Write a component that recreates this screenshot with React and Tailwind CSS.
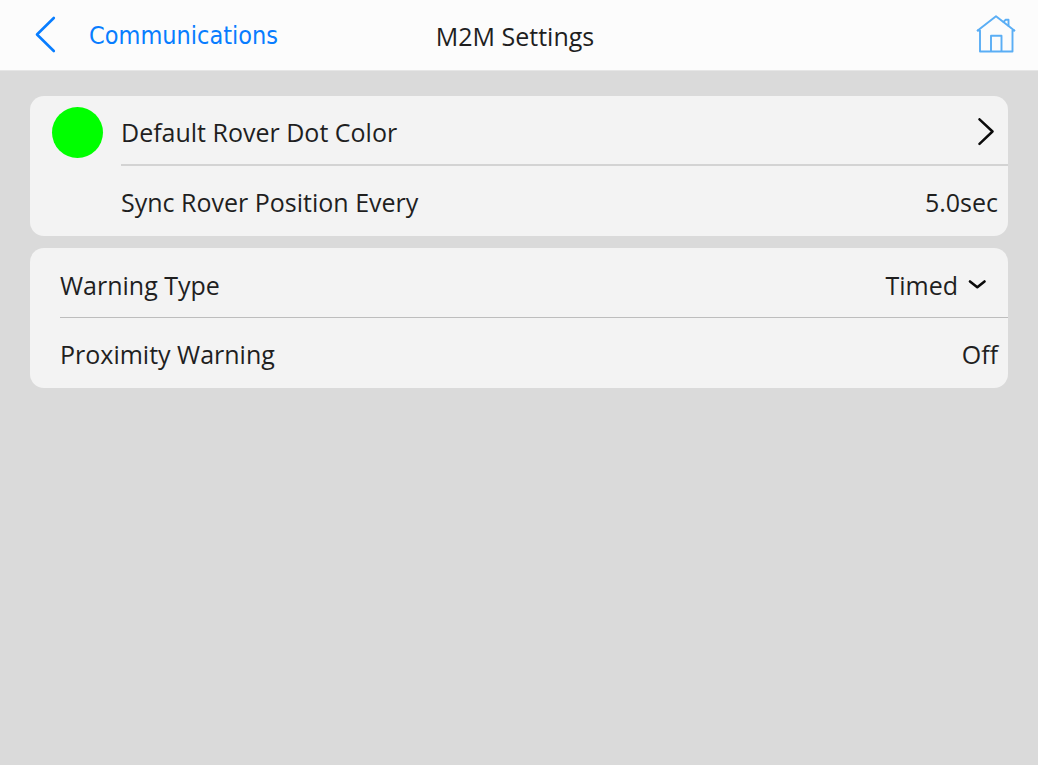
export default function App() {
  return (
    <div className="min-h-screen bg-[#dadada] font-['Open_Sans','Noto_Sans',sans-serif] text-[25px] leading-8 text-[#1f1f1f]">
      <Header title="M2M Settings" back="Communications" />

      <main className="flex flex-col gap-3 px-[30px] pt-[25px]">
        <Card>
          <button type="button" className="flex w-full items-center pl-[22px] text-left">
            <span className="mt-[3px] size-[51px] shrink-0 rounded-full bg-[#00ff00]" />
            <span className="ml-[18px] flex h-[70px] flex-1 items-center justify-between border-b-2 border-[#d3d3d3] pt-1 pr-[14px]">
              Default Rover Dot Color
              <ChevronRight />
            </span>
          </button>
          <ValueRow label="Sync Rover Position Every" value="5.0sec" className="pl-[91px]" />
        </Card>

        <Card>
          <div className="pl-[30px]">
            <div className="flex h-[70px] items-center justify-between border-b border-[#bdbdbd] pt-1 pr-[22px]">
              <label htmlFor="warning-type">Warning Type</label>
              <div className="relative flex items-center">
                <select
                  id="warning-type"
                  defaultValue="Timed"
                  className="field-sizing-content cursor-pointer appearance-none bg-transparent pr-7 outline-none"
                >
                  <option>Timed</option>
                </select>
                <ChevronDown />
              </div>
            </div>
          </div>
          <ValueRow label="Proximity Warning" value="Off" className="pl-[30px]" />
        </Card>
      </main>
    </div>
  );
}

const Header = ({ title, back }) => (
  <header className="grid h-[71px] grid-cols-[1fr_auto_1fr] items-center border-b border-[#e6e6e6] bg-[#fcfcfc] pr-[22px] pb-0.5 pl-[34px]">
    <a href="#communications" className="flex items-center gap-8 font-['DejaVu_Sans_Condensed','DejaVu_Sans',sans-serif] text-[#087dff]">
      <svg className="h-[38px] w-[23px]" viewBox="0 0 23 38" fill="none" stroke="currentColor" strokeWidth="2.6" strokeLinecap="round" strokeLinejoin="round">
        <path d="M19.8 3 3 19.5l16.8 16.5" />
      </svg>
      <span className="pt-1">{back}</span>
    </a>
    <h1 className="pt-1 pr-5">{title}</h1>
    <a href="#home" aria-label="Home" className="justify-self-end text-[#5aaef5]">
      <HomeIcon />
    </a>
  </header>
);

const Card = ({ children }) => (
  <section className="overflow-hidden rounded-[14px] bg-[#f3f3f3]">{children}</section>
);

// Label on the left, tappable value on the right
const ValueRow = ({ label, value, className }) => (
  <button type="button" className={`flex h-[70px] w-full items-center justify-between pt-0.5 pr-[10px] text-left ${className}`}>
    <span>{label}</span>
    <span>{value}</span>
  </button>
);

const ChevronRight = () => (
  <svg className="h-7 w-4" viewBox="0 0 16 28" fill="none" stroke="#0a0a0a" strokeWidth="2.5" strokeLinecap="round" strokeLinejoin="round">
    <path d="M1.5 1.3 14.5 13.5 1.5 25.8" />
  </svg>
);

const ChevronDown = () => (
  <svg className="pointer-events-none absolute right-0 h-[10px] w-[18px]" viewBox="0 0 18 10" fill="none" stroke="#0a0a0a" strokeWidth="2.6" strokeLinecap="round" strokeLinejoin="round">
    <path d="M2 1.5 9.3 7.2 16.5 1.5" />
  </svg>
);

const HomeIcon = () => (
  <svg className="h-[38px] w-[40px]" viewBox="0 0 40 38" fill="none" stroke="currentColor" strokeWidth="1.9" strokeLinecap="round" strokeLinejoin="round">
    <path d="M1.7 15.5 20 1.2l18.3 14.3" />
    <path d="M1.7 15.5H4v21h32.5v-21h1.8" />
    <path d="M15 36V20.7h10.5V36" />
    <path d="M27.5 7 29.5 4.8h3v6" />
  </svg>
);
